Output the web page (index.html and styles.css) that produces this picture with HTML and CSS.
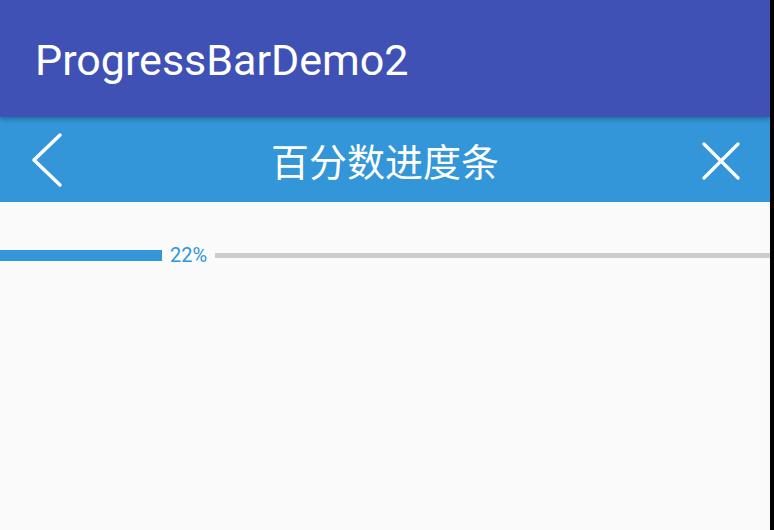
FILE: index.html
```html
<!DOCTYPE html>
<html lang="zh">
<head>
<meta charset="utf-8">
<title>ProgressBarDemo2</title>
<link rel="stylesheet" href="styles.css">
</head>
<body>
<div class="app">
  <header class="appbar">
    <h1 class="appbar-title">ProgressBarDemo2</h1>
  </header>
  <nav class="navbar">
    <svg class="icon back" width="34" height="56" viewBox="0 0 34 56">
      <polyline points="29,3 3,28 29,53" fill="none" stroke="#fff" stroke-width="3.5" stroke-linecap="round" stroke-linejoin="round"/>
    </svg>
    <div class="nav-title">百分数进度条</div>
    <svg class="icon close" width="38" height="38" viewBox="0 0 38 38">
      <path d="M2 2 L36 36 M36 2 L2 36" fill="none" stroke="#fff" stroke-width="3.2" stroke-linecap="round"/>
    </svg>
  </nav>
  <main class="content">
    <div class="progress">
      <div class="progress-reached"></div>
      <span class="progress-text">22%</span>
      <div class="progress-unreached"></div>
    </div>
  </main>
</div>
</body>
</html>
```

FILE: styles.css
```css
html, body {
  margin: 0;
  padding: 0;
  height: 100%;
  background: #000;
  overflow: hidden;
}
.app {
  width: 770px;
  height: 530px;
  background: #fafafa;
  display: flex;
  flex-direction: column;
  font-family: Roboto, "Noto Sans CJK SC", sans-serif;
}
.appbar {
  height: 117px;
  background: #3f51b5;
  display: flex;
  align-items: center;
  padding-left: 35px;
  position: relative;
  z-index: 2;
  box-shadow: 0 2px 5px rgba(0, 0, 0, 0.3);
  flex: none;
}
.appbar-title {
  margin: 0;
  color: #fff;
  font-size: 43px;
  font-weight: 400;
  line-height: 1;
  padding-top: 3px;
}
.navbar {
  height: 85px;
  background: #3296d8;
  display: flex;
  align-items: center;
  justify-content: space-between;
  padding: 0 30px 0 31px;
  flex: none;
}
.icon { display: block; flex: none; }
.back { margin-top: 1px; }
.close { margin-top: 3px; }
.nav-title {
  color: #fff;
  font-family: "Noto Sans CJK SC", sans-serif;
  font-size: 38px;
  line-height: 1;
  margin-left: 3px;
}
.content {
  flex: 1;
  padding-top: 43px;
}
.progress {
  display: flex;
  align-items: center;
  height: 20px;
}
.progress-reached {
  width: 162px;
  height: 11px;
  background: #3296d8;
  flex: none;
}
.progress-text {
  color: #3296d8;
  font-size: 20px;
  line-height: 20px;
  margin: 0 8px 0 8px;
  flex: none;
}
.progress-unreached {
  flex: 1;
  height: 5px;
  background: #cccccc;
}
```
